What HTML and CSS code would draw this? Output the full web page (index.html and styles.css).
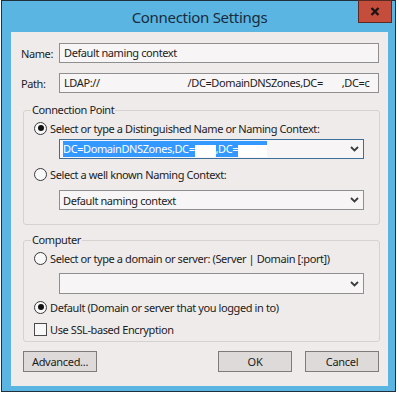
FILE: index.html
```html
<!DOCTYPE html>
<html>
<head>
    <title>Connection Settings</title>
    <meta charset="UTF-8">
    <link rel="stylesheet" href="styles.css">
</head>
<body>
    <div class="window">
        <div class="titlebar">
            <span class="title">Connection Settings</span>
            <div class="close-btn">
                <svg width="10" height="9" viewBox="0 0 10 9"><path d="M1.5 1 L8.5 8 M8.5 1 L1.5 8" stroke="#1b1414" stroke-width="2.4" fill="none"/></svg>
            </div>
        </div>
        <div class="content">
            <div class="field-row">
                <span class="field-label">Name:</span>
                <div class="textbox">Default naming context</div>
            </div>
            <div class="field-row path-row">
                <span class="field-label">Path:</span>
                <div class="textbox">LDAP://<span class="gap-host"></span>/DC=DomainDNSZones,DC=<span class="gap-dc"></span>,DC=c</div>
            </div>

            <fieldset class="group group-point">
                <legend>Connection Point</legend>
                <div class="option"><span class="radio checked"></span>Select or type a Distinguished Name or Naming Context:</div>
                <div class="combo focused">
                    <span class="combo-text"><span class="selection">DC=DomainDNSZones,DC=<span class="redact r1"></span>,DC=<span class="redact r2"></span></span></span>
                    <svg class="chevron" width="9" height="6" viewBox="0 0 9 6"><path d="M1 1 L4.5 4.5 L8 1" stroke="#3c3c3c" stroke-width="1.8" fill="none"/></svg>
                </div>
                <div class="option option-2"><span class="radio"></span>Select a well known Naming Context:</div>
                <div class="combo combo-2">
                    <span class="combo-text">Default naming context</span>
                    <svg class="chevron" width="9" height="6" viewBox="0 0 9 6"><path d="M1 1 L4.5 4.5 L8 1" stroke="#3c3c3c" stroke-width="1.8" fill="none"/></svg>
                </div>
            </fieldset>

            <fieldset class="group group-computer">
                <legend>Computer</legend>
                <div class="option"><span class="radio"></span>Select or type a domain or server: (Server | Domain [:port])</div>
                <div class="combo combo-3">
                    <span class="combo-text"></span>
                    <svg class="chevron" width="9" height="6" viewBox="0 0 9 6"><path d="M1 1 L4.5 4.5 L8 1" stroke="#3c3c3c" stroke-width="1.8" fill="none"/></svg>
                </div>
                <div class="option option-4"><span class="radio checked"></span>Default (Domain or server that you logged in to)</div>
                <div class="option option-5"><span class="checkbox"></span>Use SSL-based Encryption</div>
            </fieldset>

            <div class="buttons">
                <button class="btn">Advanced...</button>
                <span class="spacer"></span>
                <button class="btn">OK</button>
                <button class="btn">Cancel</button>
            </div>
        </div>
    </div>
</body>
</html>
```

FILE: styles.css
```css
body {
    margin: 0;
    background-color: #ffffff;
    font-family: 'Noto Sans', 'Open Sans', sans-serif;
    font-size: 11px;
    letter-spacing: -0.4px;
    color: #1c1c1c;
}
.window {
    position: relative;
    margin-left: 1px;
    width: 377px;
    height: 354px;
    border: 1px solid #20303c;
    background-color: #5ab5e2;
    padding: 31px 7px 5px 9px;
}
.titlebar {
    position: absolute;
    left: 0;
    right: 0;
    top: 0;
    height: 31px;
    display: flex;
    align-items: center;
    justify-content: center;
}
.title {
    font-size: 15px;
    letter-spacing: -0.3px;
    color: #1a2b3c;
    margin-left: 2px;
}
.close-btn {
    position: absolute;
    top: -1px;
    right: 3px;
    width: 32px;
    height: 21px;
    background-color: #c44d3c;
    border: 1px solid #5a2a24;
    display: flex;
    align-items: center;
    justify-content: center;
}
.content {
    height: 354px;
    background-color: #efebeb;
    padding: 11px 0 0 10px;
    box-sizing: border-box;
}
.field-row {
    display: flex;
    align-items: center;
    height: 20px;
}
.path-row {
    margin-top: 10px;
}
.field-label {
    width: 38px;
}
.textbox {
    width: 320px;
    height: 20px;
    box-sizing: border-box;
    border: 1px solid #8f8f8f;
    background-color: #f7f5f5;
    padding: 0 4px;
    line-height: 18px;
    white-space: nowrap;
    overflow: hidden;
}
.gap-host {
    display: inline-block;
    width: 88px;
}
.gap-dc {
    display: inline-block;
    width: 19px;
}
.group {
    margin: 9px 0 0 2px;
    width: 357px;
    box-sizing: border-box;
    border: 1px solid #d6d2d2;
    border-radius: 3px;
    padding: 2px 0 14px 10px;
}
.group legend {
    padding: 0 1px;
    margin-left: -3px;
    line-height: 16px;
}
.group-computer {
    margin-top: 7px;
    padding-top: 2px;
    padding-bottom: 4px;
}
.option {
    display: flex;
    align-items: center;
    height: 16px;
}
.radio {
    width: 11px;
    height: 11px;
    border: 1px solid #3a3a3a;
    border-radius: 50%;
    background-color: #f8f8f8;
    margin-right: 3px;
    display: flex;
    align-items: center;
    justify-content: center;
    flex-shrink: 0;
}
.radio.checked::after {
    content: '';
    width: 6px;
    height: 6px;
    border-radius: 50%;
    background-color: #111;
}
.checkbox {
    width: 11px;
    height: 11px;
    border: 1px solid #4a4a4a;
    background-color: #f8f8f8;
    margin-right: 3px;
    flex-shrink: 0;
}
.combo {
    display: flex;
    align-items: center;
    margin: 3px 0 0 25px;
    width: 305px;
    height: 20px;
    box-sizing: border-box;
    border: 1px solid #8f8f8f;
    background-color: #f7f5f5;
    padding: 0 4px 0 3px;
}
.combo.focused {
    border-color: #3d6e98;
}
.combo-text {
    flex: 1;
    white-space: nowrap;
    overflow: hidden;
}
.selection {
    background-color: #3399ff;
    color: #ffffff;
    padding: 1px 0;
}
.redact {
    display: inline-block;
    height: 12px;
    vertical-align: middle;
    background-color: #ffffff;
}
.r1 {
    width: 21px;
}
.r2 {
    width: 29px;
}
.option-2 {
    margin-top: 7px;
}
.combo-2 {
    margin-top: 8px;
}
.combo-3 {
    margin-top: 7px;
    height: 21px;
}
.option-4 {
    margin-top: 5px;
}
.option-5 {
    margin-top: 6px;
}
.buttons {
    display: flex;
    margin: 9px 0 0 2px;
    width: 356px;
    gap: 13px;
}
.spacer {
    flex: 1;
}
.btn {
    width: 74px;
    height: 21px;
    font-family: inherit;
    font-size: 11px;
    letter-spacing: -0.3px;
    color: #1c1c1c;
    background-color: #dedad9;
    border: 1px solid #7e7b7b;
    padding: 0;
}
```
